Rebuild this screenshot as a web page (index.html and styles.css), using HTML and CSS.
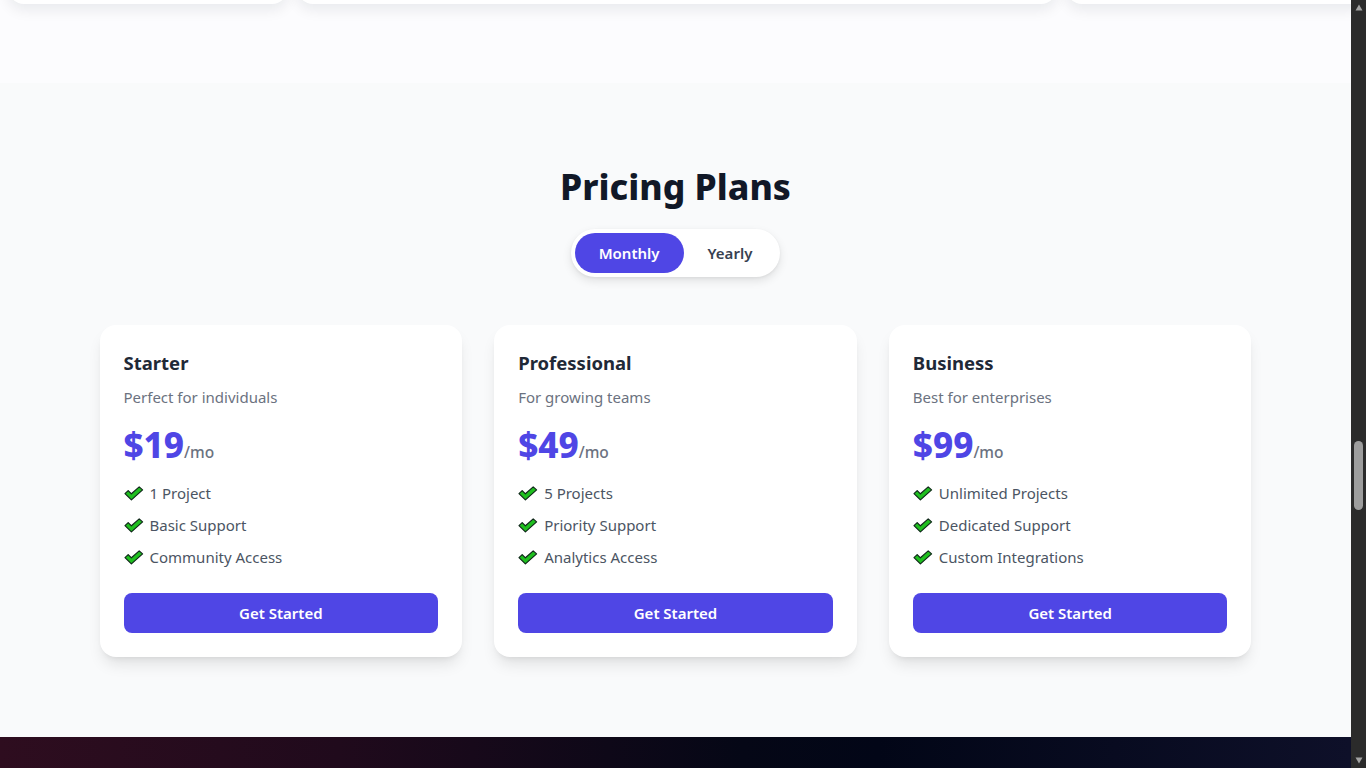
FILE: index.html
```html
<!DOCTYPE html>
<html lang="en">
<head>
<meta charset="utf-8">
<title>Pricing</title>
<link rel="stylesheet" href="styles.css">
</head>
<body>
<div class="window">
  <div class="viewport" id="viewport">
    <header class="hero"></header>
    <section class="about"></section>
    <section class="features">
      <div class="feature-row">
        <div class="feature-card feature-card-a"></div>
        <div class="feature-card feature-card-b"></div>
        <div class="feature-card feature-card-c"></div>
      </div>
    </section>
    <section class="pricing" id="pricing">
      <h2 class="pricing-title">Pricing Plans</h2>
      <div class="toggle">
        <button class="toggle-btn active">Monthly</button>
        <button class="toggle-btn">Yearly</button>
      </div>
      <div class="plans">
        <div class="plan">
          <h3 class="plan-name">Starter</h3>
          <p class="plan-desc">Perfect for individuals</p>
          <div class="plan-price"><span class="amount">$19</span><span class="per">/mo</span></div>
          <ul class="features-list">
            <li><svg class="check" viewBox="0 0 20 15"><path d="M1 7.6 L4.2 4.6 L7.4 7.8 L15.2 0.9 L18.6 3.9 L7.4 13.9 Z"/></svg>1 Project</li>
            <li><svg class="check" viewBox="0 0 20 15"><path d="M1 7.6 L4.2 4.6 L7.4 7.8 L15.2 0.9 L18.6 3.9 L7.4 13.9 Z"/></svg>Basic Support</li>
            <li><svg class="check" viewBox="0 0 20 15"><path d="M1 7.6 L4.2 4.6 L7.4 7.8 L15.2 0.9 L18.6 3.9 L7.4 13.9 Z"/></svg>Community Access</li>
          </ul>
          <button class="plan-btn">Get Started</button>
        </div>
        <div class="plan">
          <h3 class="plan-name">Professional</h3>
          <p class="plan-desc">For growing teams</p>
          <div class="plan-price"><span class="amount">$49</span><span class="per">/mo</span></div>
          <ul class="features-list">
            <li><svg class="check" viewBox="0 0 20 15"><path d="M1 7.6 L4.2 4.6 L7.4 7.8 L15.2 0.9 L18.6 3.9 L7.4 13.9 Z"/></svg>5 Projects</li>
            <li><svg class="check" viewBox="0 0 20 15"><path d="M1 7.6 L4.2 4.6 L7.4 7.8 L15.2 0.9 L18.6 3.9 L7.4 13.9 Z"/></svg>Priority Support</li>
            <li><svg class="check" viewBox="0 0 20 15"><path d="M1 7.6 L4.2 4.6 L7.4 7.8 L15.2 0.9 L18.6 3.9 L7.4 13.9 Z"/></svg>Analytics Access</li>
          </ul>
          <button class="plan-btn">Get Started</button>
        </div>
        <div class="plan">
          <h3 class="plan-name">Business</h3>
          <p class="plan-desc">Best for enterprises</p>
          <div class="plan-price"><span class="amount">$99</span><span class="per">/mo</span></div>
          <ul class="features-list">
            <li><svg class="check" viewBox="0 0 20 15"><path d="M1 7.6 L4.2 4.6 L7.4 7.8 L15.2 0.9 L18.6 3.9 L7.4 13.9 Z"/></svg>Unlimited Projects</li>
            <li><svg class="check" viewBox="0 0 20 15"><path d="M1 7.6 L4.2 4.6 L7.4 7.8 L15.2 0.9 L18.6 3.9 L7.4 13.9 Z"/></svg>Dedicated Support</li>
            <li><svg class="check" viewBox="0 0 20 15"><path d="M1 7.6 L4.2 4.6 L7.4 7.8 L15.2 0.9 L18.6 3.9 L7.4 13.9 Z"/></svg>Custom Integrations</li>
          </ul>
          <button class="plan-btn">Get Started</button>
        </div>
      </div>
    </section>
    <footer class="footer"></footer>
  </div>
  <div class="scrollbar" aria-hidden="true">
    <div class="scroll-btn"><svg viewBox="0 0 8 7" class="arrow"><polygon points="4,0.5 7.5,6.5 0.5,6.5"/></svg></div>
    <div class="scroll-track"><div class="scroll-thumb" id="thumb"></div></div>
    <div class="scroll-btn"><svg viewBox="0 0 8 7" class="arrow"><polygon points="0.5,0.5 7.5,0.5 4,6.5"/></svg></div>
  </div>
</div>
<script src="script.js"></script>
</body>
</html>
```

FILE: styles.css
```css
html, body {
  margin: 0;
  padding: 0;
  height: 100%;
}

body {
  overflow: hidden;
  font-family: "Noto Sans", "Open Sans", sans-serif;
  background: #fcfcfe;
}

.window {
  display: flex;
  height: 100vh;
}

.viewport {
  flex: 1;
  min-width: 0;
  height: 100vh;
  overflow-y: scroll;
  overflow-x: hidden;
  scrollbar-width: none;
  background: #fcfcfe;
}

.viewport::-webkit-scrollbar {
  display: none;
}

.scrollbar {
  flex: none;
  width: 15px;
  display: flex;
  flex-direction: column;
  background: #2b2b2b;
}

.scroll-btn {
  height: 15px;
  flex: none;
  display: flex;
  align-items: center;
  justify-content: center;
}

.arrow {
  width: 8px;
  height: 7px;
}

.arrow polygon {
  fill: #a3a3a3;
}

.scroll-track {
  flex: 1;
  display: flex;
  flex-direction: column;
  align-items: center;
}

.scroll-thumb {
  width: 9px;
  height: 69px;
  margin-top: 426px;
  border-radius: 5px;
  background: #9d9d9d;
}

.hero {
  height: 2400px;
  background: #fcfcfe;
}

.about {
  height: 1804px;
  background: #fcfcfe;
}

.features {
  background: #fcfcfe;
  padding: 80px 0 79px;
  overflow: hidden;
}

.feature-row {
  display: flex;
  gap: 9px;
  padding-left: 8px;
}

.feature-card {
  flex: none;
  height: 460px;
  background: #ffffff;
  border-radius: 16px;
  box-shadow: 0 6px 14px rgba(17, 24, 39, 0.08);
}

.feature-card-a { width: 280px; }
.feature-card-b { width: 760px; }
.feature-card-c { width: 300px; }

.pricing {
  background: #f9fafb;
  padding: 80px 0;
  text-align: center;
}

.pricing-title {
  margin: 3px 0 23px;
  font-size: 35.5px;
  line-height: 40px;
  font-weight: 800;
  color: #111827;
}

.toggle {
  display: inline-flex;
  padding: 4px;
  background: #ffffff;
  border-radius: 9999px;
  box-shadow: 0 4px 10px rgba(0, 0, 0, 0.1), 0 1px 3px rgba(0, 0, 0, 0.06);
  margin-bottom: 48px;
}

.toggle-btn {
  border: none;
  background: transparent;
  font-family: inherit;
  font-size: 15px;
  line-height: 24px;
  font-weight: 600;
  color: #374151;
  padding: 8px 24px;
  border-radius: 9999px;
  cursor: pointer;
}

.toggle-btn.active {
  background: #4f46e5;
  color: #ffffff;
}

.plans {
  max-width: 1152px;
  margin: 0 auto;
  display: grid;
  grid-template-columns: repeat(3, 1fr);
  gap: 32px;
  text-align: left;
}

.plan {
  background: #ffffff;
  border-radius: 16px;
  padding: 24px;
  box-shadow: 0 10px 15px -3px rgba(0, 0, 0, 0.1), 0 4px 6px -4px rgba(0, 0, 0, 0.1);
}

.plan-name {
  margin: 0;
  font-size: 18.5px;
  line-height: 28px;
  font-weight: 700;
  color: #1f2937;
}

.plan-desc {
  margin: 8px 0 0;
  font-size: 15px;
  line-height: 24px;
  color: #6b7280;
}

.plan-price {
  margin-top: 16px;
  height: 40px;
  font-size: 35px;
  line-height: 40px;
}

.amount {
  font-size: 35px;
  line-height: 40px;
  font-weight: 800;
  color: #4f46e5;
}

.per {
  font-size: 15.5px;
  line-height: 1;
  font-weight: 500;
  color: #6b7280;
}

.features-list {
  list-style: none;
  margin: 16px 0 24px;
  padding: 0;
}

.features-list li {
  display: flex;
  align-items: center;
  gap: 6px;
  font-size: 15px;
  line-height: 24px;
  color: #4b5563;
}

.features-list li + li {
  margin-top: 8px;
}

.check {
  width: 20px;
  height: 15px;
  flex: none;
}

.check path {
  fill: #1fbf1f;
  stroke: #10281a;
  stroke-width: 1.2;
  stroke-linejoin: round;
}

.plan-btn {
  display: block;
  width: 100%;
  border: none;
  border-radius: 8px;
  padding: 8px 16px;
  background: #4f46e5;
  color: #ffffff;
  font-family: inherit;
  font-size: 15px;
  line-height: 24px;
  font-weight: 600;
  cursor: pointer;
}

.footer {
  height: 2736px;
  background: linear-gradient(90deg, #2e0d1f 0%, #200a1c 25%, #050716 55%, #020617 65%, #0e1029 100%);
}
```

FILE: script.js
```js
(function () {
  var vp = document.getElementById('viewport');
  var pricing = document.getElementById('pricing');
  var thumb = document.getElementById('thumb');
  function place() {
    vp.scrollTop = pricing.offsetTop - 83;
    var track = thumb.parentNode.clientHeight;
    var total = vp.scrollHeight;
    var view = vp.clientHeight;
    var h = Math.max(20, Math.round(track * view / total));
    var top = Math.round((vp.scrollTop / (total - view)) * (track - h));
    thumb.style.height = h + 'px';
    thumb.style.marginTop = top + 'px';
  }
  place();
  window.addEventListener('load', place);
})();
```
